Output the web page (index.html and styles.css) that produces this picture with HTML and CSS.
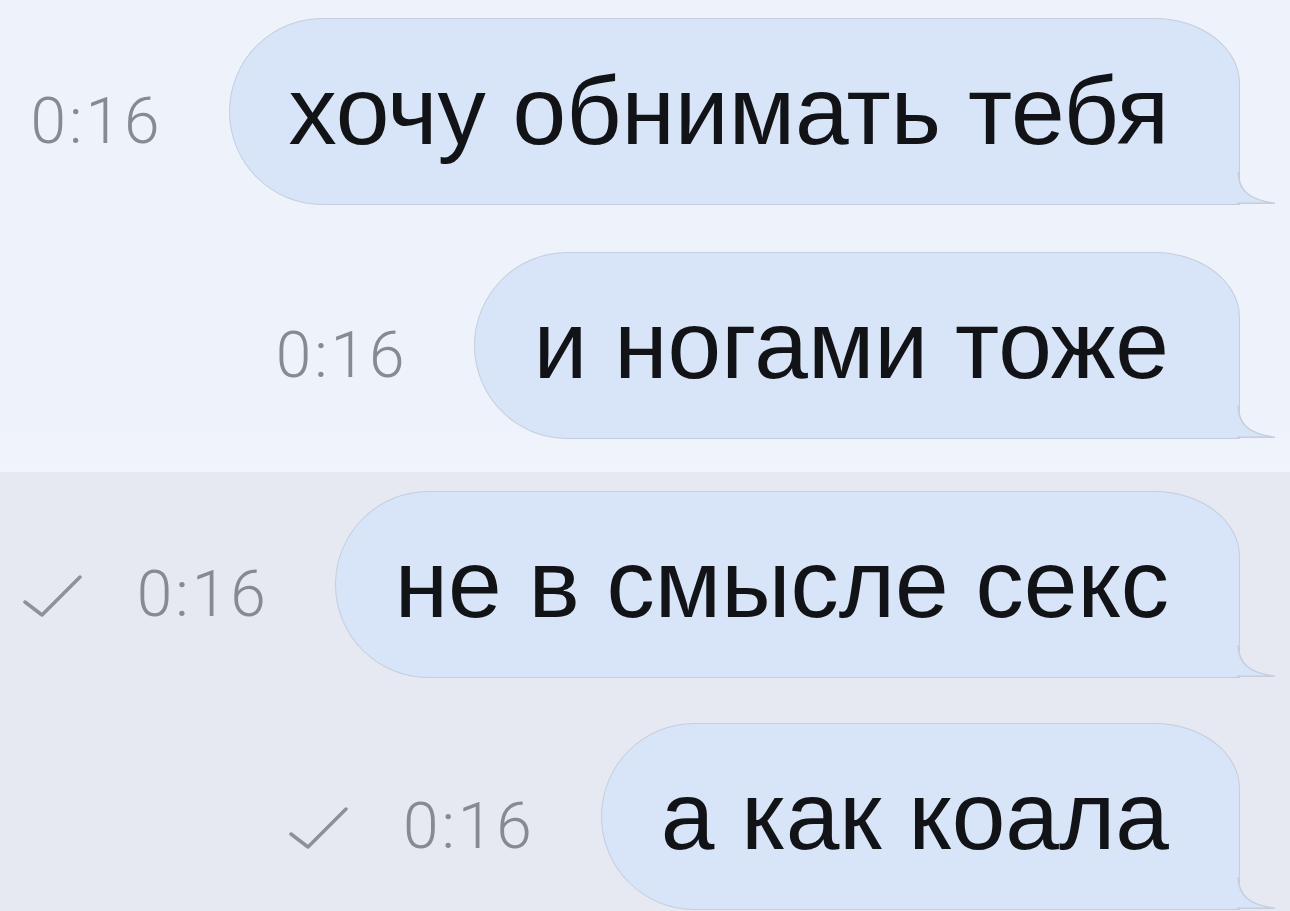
FILE: index.html
```html
<!DOCTYPE html>
<html lang="ru">
<head>
<meta charset="utf-8">
<title>Чат</title>
<link rel="stylesheet" href="styles.css">
</head>
<body>
<div class="chat">
  <section class="group group-read">
    <div class="row">
      <div class="meta"><span class="time">0:16</span></div>
      <div class="bubble">хочу обнимать тебя<svg class="tail" viewBox="0 0 60 70" width="60" height="70"><path class="tail-fill" d="M0,36 L21.25,36 C21.25,55 33,64 58,67.25 L0,67.25 Z"/><path class="tail-line" d="M21.25,36 C21.25,55 33,64 58,67.25 L20,67.25"/></svg></div>
    </div>
    <div class="row">
      <div class="meta"><span class="time">0:16</span></div>
      <div class="bubble">и ногами тоже<svg class="tail" viewBox="0 0 60 70" width="60" height="70"><path class="tail-fill" d="M0,36 L21.25,36 C21.25,55 33,64 58,67.25 L0,67.25 Z"/><path class="tail-line" d="M21.25,36 C21.25,55 33,64 58,67.25 L20,67.25"/></svg></div>
    </div>
  </section>
  <section class="group group-unread">
    <div class="row">
      <div class="meta"><svg class="check" viewBox="0 0 60 44" width="60" height="44"><path d="M3,28 L20,41 L58,3"/></svg><span class="time">0:16</span></div>
      <div class="bubble">не в смысле секс<svg class="tail" viewBox="0 0 60 70" width="60" height="70"><path class="tail-fill" d="M0,36 L21.25,36 C21.25,55 33,64 58,67.25 L0,67.25 Z"/><path class="tail-line" d="M21.25,36 C21.25,55 33,64 58,67.25 L20,67.25"/></svg></div>
    </div>
    <div class="row">
      <div class="meta"><svg class="check" viewBox="0 0 60 44" width="60" height="44"><path d="M3,28 L20,41 L58,3"/></svg><span class="time">0:16</span></div>
      <div class="bubble">а как коала<svg class="tail" viewBox="0 0 60 70" width="60" height="70"><path class="tail-fill" d="M0,36 L21.25,36 C21.25,55 33,64 58,67.25 L0,67.25 Z"/><path class="tail-line" d="M21.25,36 C21.25,55 33,64 58,67.25 L20,67.25"/></svg></div>
    </div>
  </section>
</div>
</body>
</html>
```

FILE: styles.css
```css
html, body {
  margin: 0;
  padding: 0;
  height: 100%;
  overflow: hidden;
}

body {
  background: #e6e9f2;
  font-family: "Liberation Sans", Arial, sans-serif;
}

.chat {
  display: flex;
  flex-direction: column;
}

.group {
  display: flex;
  flex-direction: column;
  gap: 47px;
  padding-right: 50px;
}

.group-read {
  background: linear-gradient(#eef2fa, #eef2fa 90%, #f1f4fa);
  padding-top: 18px;
  padding-bottom: 31px;
  border-bottom: 2px solid #f2f4f9;
}

.group-unread {
  background: #e6e9f2;
  padding-top: 19px;
  gap: 45px;
}

.row {
  display: flex;
  justify-content: flex-end;
  align-items: center;
  gap: 66px;
}

.meta {
  display: flex;
  align-items: center;
  gap: 55px;
  padding-top: 20px;
}

.time {
  font-family: Roboto, "Liberation Sans", sans-serif;
  font-weight: 300;
  font-size: 64px;
  letter-spacing: 3px;
  line-height: 1;
  color: #868a92;
}

.check {
  display: block;
  margin-top: 2px;
}

.check path {
  fill: none;
  stroke: #8d9199;
  stroke-width: 3.5;
  stroke-linecap: round;
  stroke-linejoin: round;
}

.bubble {
  position: relative;
  box-sizing: border-box;
  height: 187px;
  padding: 0 70px 0 59px;
  display: flex;
  align-items: center;
  background: #d8e4f7;
  border: 1.5px solid #c4cedd;
  border-radius: 94px 86px 0 94px / 94px 66px 0 94px;
  font-size: 96.5px;
  line-height: 1;
  color: #121316;
  white-space: nowrap;
}

.tail {
  position: absolute;
  right: -38px;
  bottom: -2px;
  overflow: visible;
}

.tail-fill {
  fill: #d8e4f7;
}

.tail-line {
  fill: none;
  stroke: #c4cedd;
  stroke-width: 1.5;
}
```
